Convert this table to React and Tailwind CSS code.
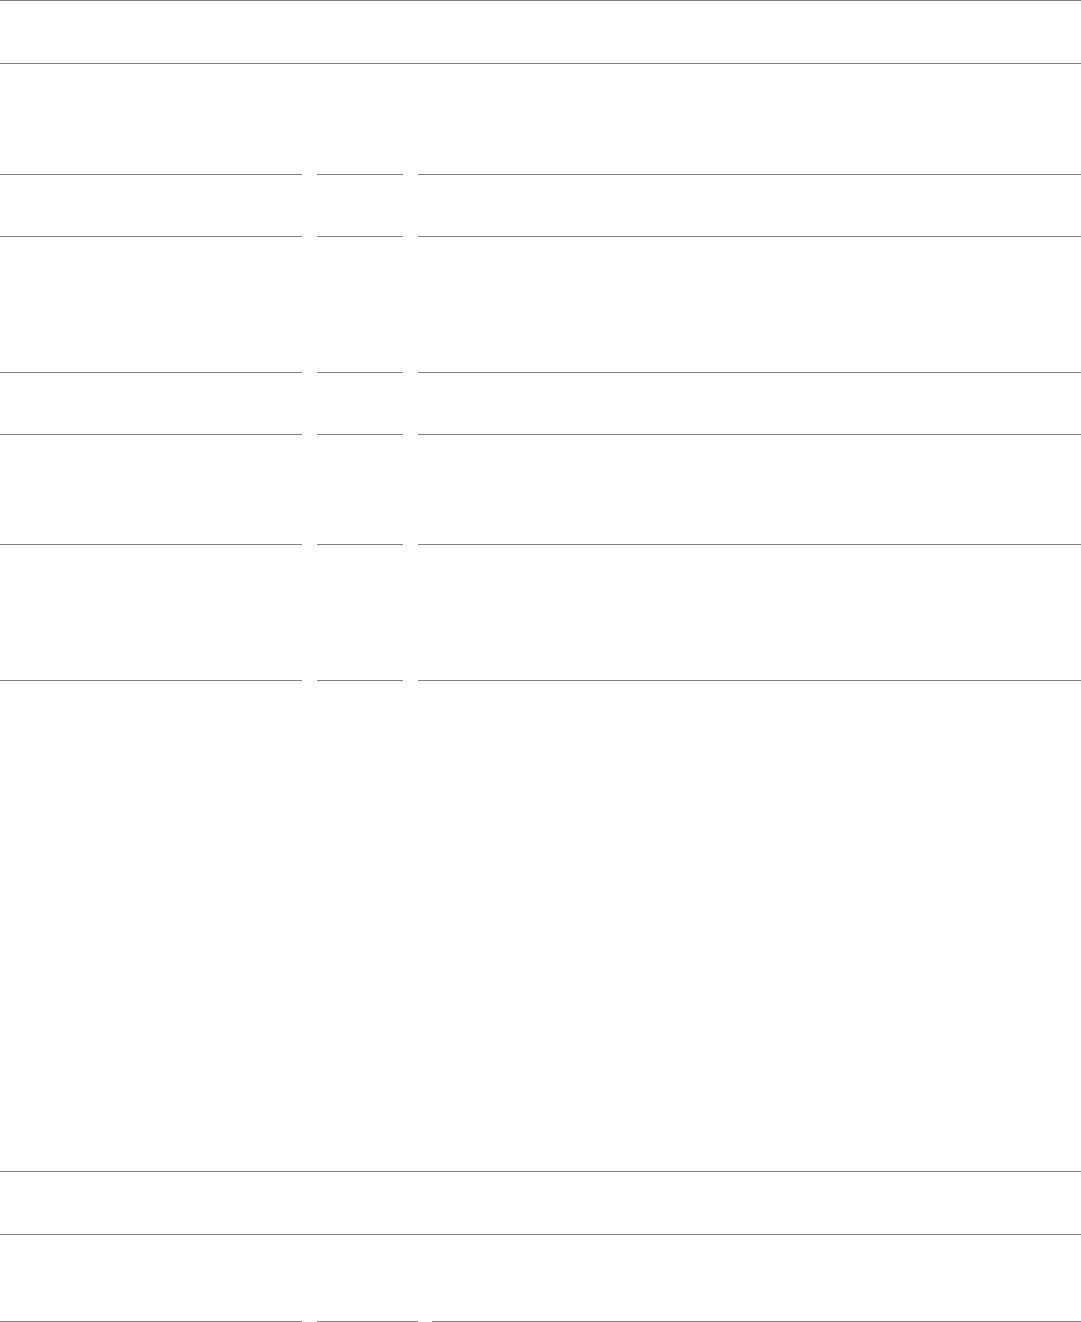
import React from "react";

// Heights of the bordered cells in each column of the form grid
const cellHeights = ["h-[62px]", "h-[136px]", "h-[62px]", "h-[110px]", "h-[136px]"];

function Column({ className }) {
  return (
    <div className={`flex flex-col ${className}`}>
      {cellHeights.map((h, i) => (
        <div key={i} className={`${h} border-t border-[#808080]`} />
      ))}
      <div className="h-px bg-[#808080]" />
    </div>
  );
}

export default function App() {
  return (
    <div className="w-[1081px] h-[1322px] bg-white flex flex-col font-['Liberation_Sans',sans-serif]">
      {/* Header bar */}
      <div className="h-[64px] border-y border-[#808080]" />
      <div className="h-[110px]" />

      {/* Three-column form grid */}
      <div className="flex">
        <Column className="w-[302px]" />
        <Column className="w-[86px] ml-[15px]" />
        <Column className="flex-1 ml-[15px]" />
      </div>

      <div className="h-[490px]" />

      {/* Footer section */}
      <div className="h-[64px] border-y border-[#808080]" />
      <div className="h-[86px]" />
      <div className="flex">
        <div className="w-[302px] h-px bg-[#808080]" />
        <div className="w-[101px] ml-[15px] h-px bg-[#808080]" />
        <div className="flex-1 ml-[14px] h-px bg-[#808080]" />
      </div>
    </div>
  );
}
